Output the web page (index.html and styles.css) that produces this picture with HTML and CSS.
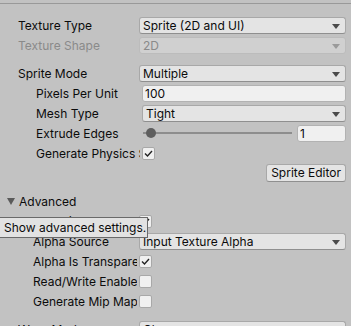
FILE: index.html
```html
<!DOCTYPE html>
<html lang="en">
<head>
  <meta charset="UTF-8" />
  <title>Import Settings</title>
  <link rel="stylesheet" href="styles.css">
</head>
<body>
  <div class="inspector">
    <div class="row">
      <div class="label">Texture Type</div>
      <div class="dropdown">Sprite (2D and UI)<span class="arrow"></span></div>
    </div>
    <div class="row disabled">
      <div class="label">Texture Shape</div>
      <div class="dropdown">2D<span class="arrow"></span></div>
    </div>

    <div class="row gap-top">
      <div class="label">Sprite Mode</div>
      <div class="dropdown">Multiple<span class="arrow"></span></div>
    </div>
    <div class="row sub">
      <div class="label">Pixels Per Unit</div>
      <div class="textfield">100</div>
    </div>
    <div class="row sub">
      <div class="label">Mesh Type</div>
      <div class="dropdown">Tight<span class="arrow"></span></div>
    </div>
    <div class="row sub">
      <div class="label">Extrude Edges</div>
      <div class="slider">
        <div class="track"><span class="knob"></span></div>
        <div class="textfield num">1</div>
      </div>
    </div>
    <div class="row sub">
      <div class="label">Generate Physics Shape</div>
      <span class="checkbox checked"><svg width="11" height="11" viewBox="0 0 11 11"><polyline points="2,5.5 4.5,8 9,3" fill="none" stroke="#222" stroke-width="1.4"/></svg></span>
    </div>
    <div class="row button-row">
      <button class="btn">Sprite Editor</button>
    </div>

    <div class="row foldout">
      <span class="fold-arrow"></span>
      <div class="fold-label">Advanced</div>
    </div>
    <div class="row adv">
      <div class="label">sRGB (Color Texture)</div>
      <span class="checkbox checked"><svg width="11" height="11" viewBox="0 0 11 11"><polyline points="2,5.5 4.5,8 9,3" fill="none" stroke="#222" stroke-width="1.4"/></svg></span>
    </div>
    <div class="row adv">
      <div class="label">Alpha Source</div>
      <div class="dropdown">Input Texture Alpha<span class="arrow"></span></div>
    </div>
    <div class="row adv">
      <div class="label">Alpha Is Transparency</div>
      <span class="checkbox checked"><svg width="11" height="11" viewBox="0 0 11 11"><polyline points="2,5.5 4.5,8 9,3" fill="none" stroke="#222" stroke-width="1.4"/></svg></span>
    </div>
    <div class="row adv">
      <div class="label">Read/Write Enabled</div>
      <span class="checkbox"></span>
    </div>
    <div class="row adv">
      <div class="label">Generate Mip Maps</div>
      <span class="checkbox"></span>
    </div>

    <div class="row gap-bottom">
      <div class="label">Wrap Mode</div>
      <div class="dropdown">Clamp<span class="arrow"></span></div>
    </div>

    <!-- hover tooltip over the Advanced foldout -->
    <div class="tooltip">Show advanced settings.</div>
  </div>
</body>
</html>
```

FILE: styles.css
```css
body {
  margin: 0;
  background: #c2c2c2;
  font-family: Inter, "Noto Sans", sans-serif;
  font-size: 12px;
  color: #0b0b0b;
  overflow: hidden;
}

.inspector {
  position: relative;
  margin-top: 3px;
  border-top: 1px solid #999;
  padding: 11px 5px 0 0;
}

.row {
  display: flex;
  align-items: center;
  height: 20px;
  padding-left: 18px;
}

.label {
  flex: none;
  width: 121px;
  white-space: nowrap;
  overflow: hidden;
}

.sub {
  padding-left: 36px;
}

.sub .label {
  width: 104px;
  margin-right: 2px;
}

.adv {
  padding-left: 33px;
}

.adv .label {
  width: 104px;
  margin-right: 2px;
}

.gap-top {
  margin-top: 8px;
}

.gap-bottom {
  margin-top: 8px;
}

.dropdown {
  position: relative;
  flex: 1;
  height: 15px;
  line-height: 15px;
  padding-left: 3px;
  background: #e4e4e4;
  border: 1px solid #a8a8a8;
  border-bottom-color: #8f8f8f;
  border-radius: 3px;
  white-space: nowrap;
  overflow: hidden;
}

.arrow {
  position: absolute;
  right: 5px;
  top: 6px;
  border-left: 4px solid transparent;
  border-right: 4px solid transparent;
  border-top: 5px solid #4a4a4a;
}

.disabled .label {
  color: #8a8a8a;
}

.disabled .dropdown {
  background: #d0d0d0;
  border-color: #bcbcbc;
  color: #8a8a8a;
}

.disabled .arrow {
  border-top-color: #9a9a9a;
}

.textfield {
  flex: 1;
  height: 15px;
  line-height: 15px;
  padding-left: 2px;
  background: #f0f0f0;
  border: 1px solid #b2b2b2;
  border-radius: 3px;
}

.slider {
  flex: 1;
  display: flex;
  align-items: center;
  gap: 5px;
}

.track {
  position: relative;
  flex: 1;
  height: 2px;
  margin-left: 1px;
  background: #8d8d8d;
}

.knob {
  position: absolute;
  left: 3px;
  top: -4px;
  width: 10px;
  height: 10px;
  border-radius: 50%;
  background: #5e5e5e;
}

.textfield.num {
  flex: none;
  width: 45px;
}

.checkbox {
  display: flex;
  align-items: center;
  justify-content: center;
  width: 11px;
  height: 11px;
  background: #f0f0f0;
  border: 1px solid #a8a8a8;
  border-radius: 2px;
}

.button-row {
  justify-content: flex-end;
}

.btn {
  height: 18px;
  padding: 0 4px;
  font: inherit;
  color: inherit;
  background: #e4e4e4;
  border: 1px solid #a8a8a8;
  border-bottom-color: #8f8f8f;
  border-radius: 3px;
  margin-top: -1px;
}

.foldout {
  margin-top: 8px;
  padding-left: 7px;
}

.fold-arrow {
  width: 0;
  height: 0;
  margin-right: 4px;
  border-left: 4px solid transparent;
  border-right: 4px solid transparent;
  border-top: 7px solid #5a5a5a;
}

.tooltip {
  position: absolute;
  left: -1px;
  top: 213px;
  width: 143px;
  height: 19px;
  line-height: 19px;
  padding-left: 4px;
  background: #e2e2e2;
  border: 1px solid #6a6a6a;
  white-space: nowrap;
}
```
